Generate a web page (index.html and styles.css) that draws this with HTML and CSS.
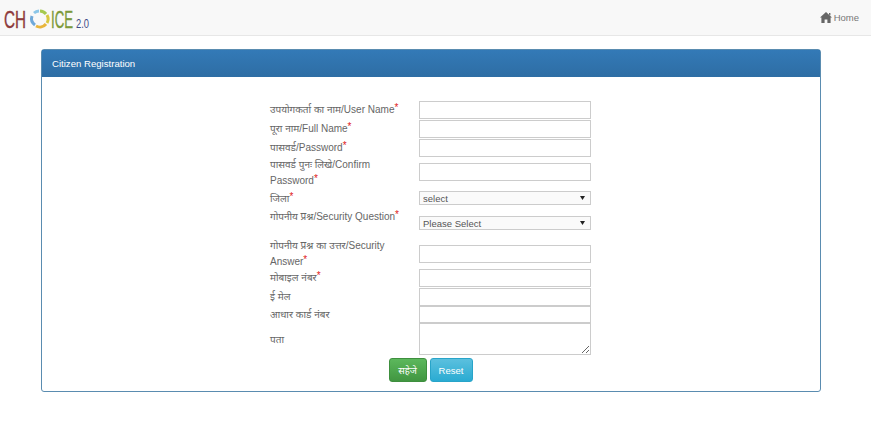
FILE: index.html
```html
<!DOCTYPE html>
<html lang="en">
<head>
  <meta charset="UTF-8">
  <meta name="viewport" content="width=device-width, initial-scale=1.0">
  <title>Citizen Registration</title>
  <link rel="stylesheet" href="styles.css">
</head>
<body>
  <nav class="navbar">
    <svg class="logo" width="92" height="35" viewBox="0 0 92 35">
      <text class="logo-ch" x="4" y="28" textLength="22" lengthAdjust="spacingAndGlyphs">CH</text>
      <g fill="none" stroke-width="3">
        <path d="M34 13 A8 8 0 0 1 39 11" stroke="#8bc6e8"/>
        <path d="M40 11 A8 8 0 0 1 46 14" stroke="#a5c94f"/>
        <path d="M47 15 A8 8 0 0 1 47 23" stroke="#d8c83e"/>
        <path d="M46 24 A8 8 0 0 1 36 26" stroke="#e8b53c"/>
        <path d="M35 25 A8 8 0 0 1 32 16" stroke="#6fa8d8"/>
      </g>
      <text class="logo-ice" x="51" y="28" textLength="22" lengthAdjust="spacingAndGlyphs">ICE</text>
      <text class="logo-ver" x="76" y="28" textLength="13" lengthAdjust="spacingAndGlyphs">2.0</text>
    </svg>
    <a class="home-link" href="#">
      <svg width="12" height="11" viewBox="0 0 12 11"><path d="M6 0 L12 5.6 L10.6 5.6 L10.6 11 L7.4 11 L7.4 7.4 L4.6 7.4 L4.6 11 L1.4 11 L1.4 5.6 L0 5.6 Z M9 1 L10.4 1 L10.4 3.6 L9 2.4 Z" fill="#666"/></svg>
      Home
    </a>
  </nav>

  <div class="panel">
    <div class="panel-heading">Citizen Registration</div>
    <form class="panel-body">
      <div class="row row-h19">
        <label>उपयोगकर्ता का नाम/User Name<span class="req">*</span></label>
        <input type="text">
      </div>
      <div class="row row-h19">
        <label>पूरा नाम/Full Name<span class="req">*</span></label>
        <input type="text">
      </div>
      <div class="row row-h19">
        <label>पासवर्ड/Password<span class="req">*</span></label>
        <input type="password">
      </div>
      <div class="row row-confirm">
        <label>पासवर्ड पुनः लिखे/Confirm Password<span class="req">*</span></label>
        <input type="password">
      </div>
      <div class="row row-district">
        <label>जिला<span class="req">*</span></label>
        <select><option>select</option></select>
      </div>
      <div class="row row-question">
        <label>गोपनीय प्रश्न/Security Question<span class="req">*</span></label>
        <select><option>Please Select</option></select>
      </div>
      <div class="row row-answer">
        <label>गोपनीय प्रश्न का उत्तर/Security Answer<span class="req">*</span></label>
        <input type="text">
      </div>
      <div class="row row-h19">
        <label>मोबाइल नंबर<span class="req">*</span></label>
        <input type="text">
      </div>
      <div class="row row-h18">
        <label>ई मेल</label>
        <input type="text">
      </div>
      <div class="row row-h17">
        <label>आधार कार्ड नंबर</label>
        <input type="text">
      </div>
      <div class="row row-address">
        <label>पता</label>
        <textarea></textarea>
      </div>
      <div class="actions">
        <button type="submit" class="btn btn-save">सहेजे</button>
        <button type="reset" class="btn btn-reset">Reset</button>
      </div>
    </form>
  </div>
</body>
</html>
```

FILE: styles.css
```css
body {
    font-family: "Liberation Sans", "Noto Sans", Arial, sans-serif;
    font-size: 10px;
    line-height: 16px;
    color: #666;
    margin: 0;
    background-color: #fff;
}
.navbar {
    display: flex;
    justify-content: space-between;
    align-items: center;
    height: 36px;
    padding-right: 12px;
    background-color: #f8f8f8;
    border-bottom: 1px solid #e7e7e7;
    box-sizing: border-box;
}
.logo {
    display: block;
}
.logo-ch {
    font-size: 24px;
    stroke: #8e3b3b;
    stroke-width: 0.4px;
    fill: #8e3b3b;
}
.logo-ice {
    font-size: 24px;
    stroke: #7c9a3a;
    stroke-width: 0.4px;
    fill: #7c9a3a;
}
.logo-ver {
    font-size: 12px;
    fill: #3d4a86;
}
.home-link {
    display: flex;
    align-items: center;
    gap: 2px;
    color: #777;
    text-decoration: none;
    font-size: 9.5px;
}
.panel {
    width: 780px;
    height: 343px;
    margin: 13px 0 0 41px;
    border: 1px solid #5a8cb0;
    border-radius: 3px;
    box-sizing: border-box;
}
.panel-heading {
    height: 27px;
    padding-left: 10px;
    line-height: 27px;
    color: #fff;
    font-size: 9.6px;
    background: linear-gradient(#337ab7, #2e6da4);
}
.panel-body {
    display: flex;
    flex-direction: column;
    padding: 24px 0 0 228px;
}
.row {
    display: grid;
    grid-template-columns: 149px 172px;
    align-items: center;
}
.row label {
    width: 140px;
    padding-top: 1px;
}
.row input,
.row select,
.row textarea {
    display: block;
    width: 172px;
    margin: 0;
    padding: 0 3px;
    border: 1px solid #ccc;
    background-color: #fff;
    box-sizing: border-box;
    font-family: inherit;
    font-size: 9.5px;
    color: #555;
}
.row input {
    height: 18px;
}
.row select {
    height: 14px;
    appearance: none;
    background: #fafafa url("data:image/svg+xml,%3Csvg xmlns='http://www.w3.org/2000/svg' width='5' height='4'%3E%3Cpath d='M0 0h5L2.5 4z' fill='%23222'/%3E%3C/svg%3E") no-repeat right 5px center;
}
.row-h19 {
    height: 19px;
    align-items: start;
}
.row-h18 {
    height: 18px;
    align-items: start;
}
.row-h17 {
    height: 17px;
    align-items: start;
}
.row-h17 input {
    height: 17px;
}
.row-confirm {
    height: 32px;
    margin-top: -2px;
    align-items: start;
}
.row-confirm input {
    margin-top: 7px;
}
.row-district {
    height: 20px;
}
.row-question {
    height: 29px;
    align-items: start;
}
.row-question select {
    margin-top: 8px;
}
.row-answer {
    height: 32px;
    align-items: start;
}
.row-answer input {
    margin-top: 8px;
}
.row-address {
    height: 32px;
}
.row-address textarea {
    height: 32px;
}
.req {
    color: #e02020;
    position: relative;
    top: -2px;
}
.actions {
    display: flex;
    justify-content: center;
    gap: 3px;
    width: 321px;
    margin-top: 3px;
}
.btn {
    height: 24px;
    padding: 0;
    border-radius: 3px;
    color: #fff;
    font-family: inherit;
    font-size: 9.5px;
    cursor: pointer;
}
.btn-save {
    width: 38px;
    border: 1px solid #3e8f3e;
    background: linear-gradient(#5cb85c, #419641);
}
.btn-reset {
    width: 43px;
    border: 1px solid #28a4c9;
    background: linear-gradient(#5bc0de, #2aabd2);
}
```
